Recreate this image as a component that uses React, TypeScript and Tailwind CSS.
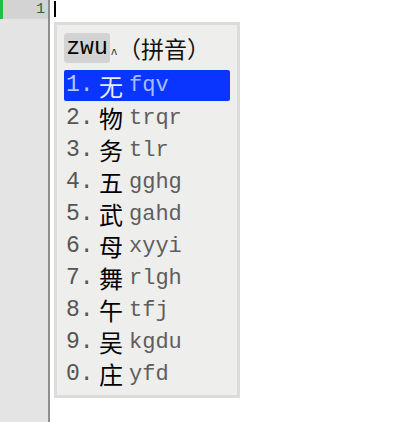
const candidates = [
  { n: "1.", c: "无", code: "fqv" },
  { n: "2.", c: "物", code: "trqr" },
  { n: "3.", c: "务", code: "tlr" },
  { n: "4.", c: "五", code: "gghg" },
  { n: "5.", c: "武", code: "gahd" },
  { n: "6.", c: "母", code: "xyyi" },
  { n: "7.", c: "舞", code: "rlgh" },
  { n: "8.", c: "午", code: "tfj" },
  { n: "9.", c: "吴", code: "kgdu" },
  { n: "0.", c: "庄", code: "yfd" },
];

const mono = { fontFamily: '"Liberation Mono", "DejaVu Sans Mono", monospace' };
const cjk = { fontFamily: '"Noto Sans CJK SC", sans-serif' };

export default function App() {
  return (
    <div className="flex h-[422px] w-[404px] bg-white overflow-hidden">
      {/* gutter */}
      <div className="flex w-[50px] flex-col bg-[#e4e4e4] border-r-2 border-[#8e8e8e]">
        <div className="flex h-[19px] bg-[#d3d3d3]">
          <div className="w-[3px] bg-[#1fbf45]" />
          <div
            className="flex-1 pr-[3px] text-right text-[15px] leading-[19px] text-[#1b6b44]"
            style={mono}
          >
            1
          </div>
        </div>
      </div>

      {/* editor */}
      <div className="flex flex-1 flex-col pl-[4px] pt-[1px]">
        <div className="h-[16px] w-[2px] bg-black" />

        <div className="mt-[5px] flex w-[186px] flex-col border-[3px] border-[#dcdcdc] bg-[#eeeeec] px-[7px] pt-[8px] pb-[5px]">
          {/* preedit */}
          <div className="flex h-[30px] items-center">
            <div
              className="flex h-[30px] w-[46px] shrink-0 items-center justify-center rounded-[3px] bg-[#d3d3d3] text-[23px] text-black"
              style={mono}
            >
              zwu
            </div>
            <span
              className="mt-[14px] w-[8px] text-center text-[12px] leading-none text-[#222]"
              style={mono}
            >
              ^
            </span>
            <span className="text-[23px] text-[#111]" style={cjk}>
              （拼音）
            </span>
          </div>

          {/* candidates */}
          <div className="mt-[7px] flex flex-col">
            {candidates.map((r, i) => (
              <div
                key={r.n}
                className={
                  i === 0
                    ? "mb-[1px] flex h-[31px] items-center rounded-[2px] bg-[#0a34ff] pl-[2px]"
                    : "flex h-[32px] items-center pl-[2px]"
                }
              >
                <span
                  className={"w-[33px] text-[23px] " + (i === 0 ? "text-[#b8c6ff]" : "text-[#555]")}
                  style={mono}
                >
                  {r.n}
                </span>
                <span
                  className={"w-[30px] text-[24px] leading-none " + (i === 0 ? "text-[#e8ecff]" : "text-black")}
                  style={cjk}
                >
                  {r.c}
                </span>
                <span
                  className={"text-[22px] " + (i === 0 ? "text-[#a9bbff]" : "text-[#5e5e5e]")}
                  style={mono}
                >
                  {r.code}
                </span>
              </div>
            ))}
          </div>
        </div>
      </div>
    </div>
  );
}
